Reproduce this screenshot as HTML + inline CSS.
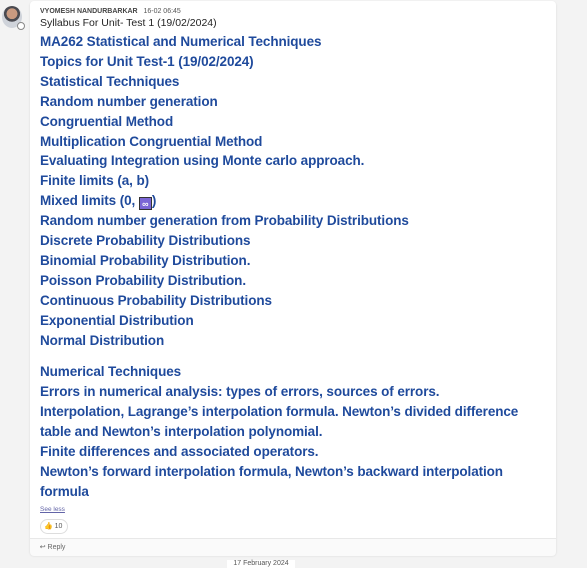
<!DOCTYPE html>
<html><head><meta charset="utf-8"><style>
body{margin:0;width:587px;height:567px;background:#f3f3f3;font-family:"Liberation Sans",sans-serif;position:relative;overflow:hidden}
.av{position:absolute;left:2px;top:6px;width:20px;height:22px;border-radius:50%;background:radial-gradient(circle at 50% 35%,#c99a80 0 30%,#4a4a50 32% 45%,#cfd3da 47%);}
.st{position:absolute;left:17px;top:22px;width:6px;height:6px;border-radius:50%;border:1px solid #888;background:#fff}
.card{position:absolute;left:30px;top:1px;width:526px;height:554px;background:#fff;border-radius:4px;box-shadow:0 1px 2px rgba(0,0,0,.12)}
.hd{position:absolute;left:10px;top:7px;font-size:7px;color:#555}
.hd b{font-weight:bold;color:#444}
.sub{position:absolute;left:10px;top:16px;font-size:10.5px;color:#242424}
.body{position:absolute;left:10px;top:31px;width:502px;color:#1f4a9c;font-weight:bold;font-size:13.5px;line-height:19.9px;letter-spacing:-0.1px}
.body p{margin:0;height:auto}
.inf{display:inline-block;width:13px;height:13px;background:#7b66d6;border:1px solid #333;color:#fff;font-size:9px;line-height:13px;text-align:center;vertical-align:-2px;box-sizing:border-box}
.see{position:absolute;left:10px;top:505px;font-size:6.5px;color:#6264a7;text-decoration:underline}
.re{position:absolute;left:10px;top:518px;width:23px;height:13px;border:1px solid #ddd;border-radius:8px;font-size:7px;color:#555;line-height:13px;padding-left:3px;box-sizing:content-box}
.ft{position:absolute;left:0;top:537px;width:526px;height:17px;background:#fafafa;border-top:1px solid #e8e8e8;border-radius:0 0 4px 4px;font-size:7px;color:#666;line-height:17px}
.date{position:absolute;left:227px;top:560px;width:68px;height:8px;background:#fff;font-size:7px;color:#555;text-align:center}
</style></head><body>
<div class="av"></div><div class="st"></div>
<div class="card">
<div class="hd"><b>VYOMESH NANDURBARKAR</b>&nbsp;&nbsp;&nbsp;16-02 06:45</div>
<div class="sub">Syllabus For Unit- Test 1 (19/02/2024)</div>
<div class="body">
<p>MA262 Statistical and Numerical Techniques</p>
<p>Topics for Unit Test-1 (19/02/2024)</p>
<p>Statistical Techniques</p>
<p>Random number generation</p>
<p>Congruential Method</p>
<p>Multiplication Congruential Method</p>
<p>Evaluating Integration using Monte carlo approach.</p>
<p>Finite limits (a, b)</p>
<p style="height:19.9px">Mixed limits (0, <span class="inf">∞</span>)</p>
<p>Random number generation from Probability Distributions</p>
<p>Discrete Probability Distributions</p>
<p>Binomial Probability Distribution.</p>
<p>Poisson Probability Distribution.</p>
<p>Continuous Probability Distributions</p>
<p>Exponential Distribution</p>
<p>Normal Distribution</p>
<p style="height:12px"></p>
<p>Numerical Techniques</p>
<p>Errors in numerical analysis: types of errors, sources of errors.</p>
<p>Interpolation, Lagrange’s interpolation formula. Newton’s divided difference table and Newton’s interpolation polynomial.</p>
<p>Finite differences and associated operators.</p>
<p>Newton’s forward interpolation formula, Newton’s backward interpolation formula</p>
</div>
<div class="see">See less</div>
<div class="re"><span style="color:#e89a2c">👍</span> 10</div>
<div class="ft">&nbsp;&nbsp;&nbsp;&nbsp;&nbsp;↩ Reply</div>
</div>
<div class="date">17 February 2024</div>
</body></html>
